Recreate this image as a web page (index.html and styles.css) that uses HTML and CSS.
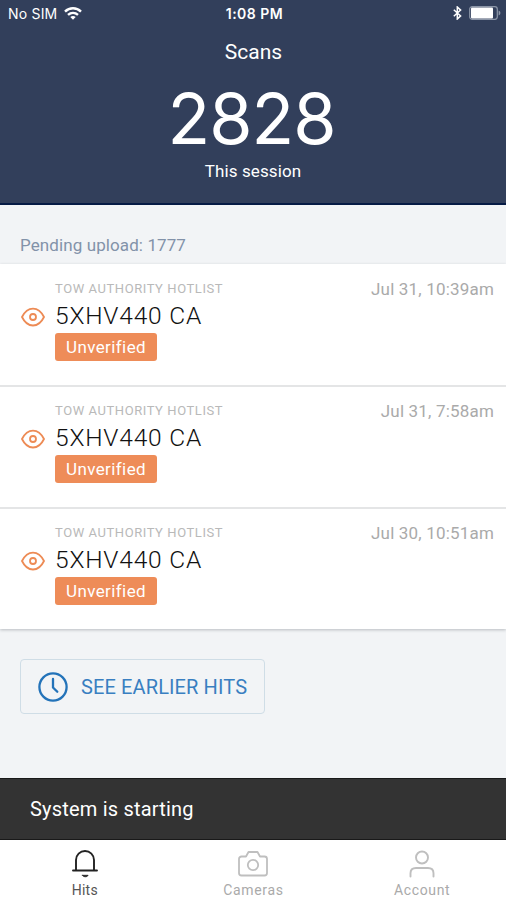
FILE: index.html
```html
<!DOCTYPE html>
<html lang="en">
<head>
<meta charset="utf-8">
<title>Scans</title>
<link rel="stylesheet" href="styles.css">
</head>
<body>
<div class="app">
  <header class="header">
    <div class="status">
      <div class="carrier"><span class="sim">No SIM</span>
        <svg width="18" height="13" viewBox="0 0 18 13" fill="none" stroke="#fff" stroke-width="2.400"><path d="M1 4.600C5.500.2 12.500.2 17 4.600M4 7.900c3-2.700 7-2.700 10 0"/><path d="M6.300 10c1.600-1.400 3.800-1.400 5.400 0L9 12.800z" fill="#fff" stroke="none"/></svg>
      </div>
      <div class="time">1:08 PM</div>
      <div class="power">
        <svg width="9" height="14" viewBox="0 0 9 14" fill="none" stroke="#fff" stroke-width="1.500"><path d="M.8 3.800 7.600 9.900 4.300 13V1l3.300 3.100L.8 10.200"/></svg>
        <svg width="32" height="14" viewBox="0 0 32 14"><rect x=".7" y=".7" width="27.600" height="12.600" rx="2.500" fill="none" stroke="#8c96a8" stroke-width="1.200"/><rect x="2" y="1.500" width="22" height="11" rx="1" fill="#fff"/><path d="M29.600 4.500c2.400 1 2.400 4 0 5z" fill="#8c96a8"/></svg>
      </div>
    </div>
    <h1 class="title"><span>Scans</span></h1>
    <div class="count"><span>2828</span></div>
    <div class="session"><span>This session</span></div>
  </header>
  <main class="content">
    <div class="pending"><span>Pending upload: 1777</span></div>
    <section class="list">
      <article class="hit">
        <svg class="eye" width="24" height="20" viewBox="0 0 24 20"><path d="M1 10C6.500-1.300 17.500-1.300 23 10 17.500 21.300 6.500 21.300 1 10z"/><circle cx="12" cy="10" r="3"/></svg>
        <div class="details"><div class="source"><span>TOW AUTHORITY HOTLIST</span></div><div class="plate"><span>5XHV440 CA</span></div><div class="badge"><span>Unverified</span></div></div>
        <time class="date"><span>Jul 31, 10:39am</span></time>
      </article>
      <article class="hit">
        <svg class="eye" width="24" height="20" viewBox="0 0 24 20"><path d="M1 10C6.500-1.300 17.500-1.300 23 10 17.500 21.300 6.500 21.300 1 10z"/><circle cx="12" cy="10" r="3"/></svg>
        <div class="details"><div class="source"><span>TOW AUTHORITY HOTLIST</span></div><div class="plate"><span>5XHV440 CA</span></div><div class="badge"><span>Unverified</span></div></div>
        <time class="date"><span>Jul 31, 7:58am</span></time>
      </article>
      <article class="hit">
        <svg class="eye" width="24" height="20" viewBox="0 0 24 20"><path d="M1 10C6.500-1.300 17.500-1.300 23 10 17.500 21.300 6.500 21.300 1 10z"/><circle cx="12" cy="10" r="3"/></svg>
        <div class="details"><div class="source"><span>TOW AUTHORITY HOTLIST</span></div><div class="plate"><span>5XHV440 CA</span></div><div class="badge"><span>Unverified</span></div></div>
        <time class="date"><span>Jul 30, 10:51am</span></time>
      </article>
    </section>
    <button class="earlier">
      <svg width="30" height="30" viewBox="0 0 30 30" fill="none" stroke="#2373b9" stroke-width="2.300" stroke-linecap="round" stroke-linejoin="round"><circle cx="15" cy="15" r="13.600"/><path d="M15 7v8.500l4.300 4.300"/></svg>
      <span>SEE EARLIER HITS</span>
    </button>
  </main>
  <div class="toast"><span>System is starting</span></div>
  <nav class="tabs">
    <a class="tab active"><svg width="28" height="28" viewBox="0 0 28 28" fill="none" stroke="#222" stroke-width="1.900" stroke-linecap="round" stroke-linejoin="round"><path d="M2 20.500h24M5 20.500V10a9 9 0 0 1 18 0v10.500"/><path d="M11.500 25.300h5.600c-1 2-4.600 2-5.600 0z" fill="#222" stroke-width=".8"/></svg><span>Hits</span></a>
    <a class="tab cameras"><svg width="30" height="28" viewBox="0 0 30 28" fill="none" stroke="#bfbfbf" stroke-width="1.800" stroke-linejoin="round"><path d="M3.500 6.500H8L10.500 2h9L22 6.500h4.500A2.500 2.500 0 0 1 29 9v14a2.500 2.500 0 0 1-2.500 2.500h-23A2.500 2.500 0 0 1 1 23V9a2.500 2.500 0 0 1 2.500-2.500z"/><circle cx="15" cy="15" r="5.200"/></svg><span>Cameras</span></a>
    <a class="tab account"><svg width="28" height="28" viewBox="0 0 28 28" fill="none" stroke="#bfbfbf" stroke-width="1.900" stroke-linecap="round"><circle cx="14" cy="7.500" r="6"/><path d="M2.500 26.500v-3.200c0-3.500 2-5.300 5.500-5.300h12c3.500 0 5.500 1.800 5.500 5.300v3.200"/></svg><span>Account</span></a>
  </nav>
</div>
</body>
</html>
```
FILE: styles.css
```css
* { box-sizing: border-box; }
body { margin: 0; font-family: Roboto, "Liberation Sans", sans-serif; }
.app { width: 506px; height: 900px; display: flex; flex-direction: column; overflow: hidden; background: #f2f4f6; }
svg { display: block; flex: none; }

.header { height: 205px; flex: none; background: #323f5b; border-bottom: 2px solid #061b45; color: #fff; text-align: center; }
.status { display: grid; grid-template-columns: 1fr auto 1fr; align-items: center; height: 26px; padding: 0 5px 0 8px; font-family: Inter, sans-serif; font-size: 14px; }
.carrier { display: flex; align-items: center; gap: 7px; }
.sim { letter-spacing: 0.2px; }
.time { font-weight: 600; font-size: 14px; letter-spacing: 0.5px; }
.power { display: flex; justify-content: flex-end; align-items: center; gap: 7px; }
.title { margin: 10px 0 0; padding-left: 1px; font-size: 21px; line-height: 32px; font-weight: 400; }
.count { margin-top: 16px; font-family: Inter, sans-serif; font-size: 70px; line-height: 69px; letter-spacing: -1px; padding-right: 3px; }
.session { margin-top: 6px; font-size: 17px; line-height: 24px; letter-spacing: 0.1px; }

.content { flex: 1; display: flex; flex-direction: column; align-items: flex-start; }
.pending { height: 59px; padding: 28px 20px 0; font-size: 17px; line-height: 24px; letter-spacing: 0.1px; color: #8292a9; }
.list { width: 100%; background: #fff; box-shadow: 0 1px 3px #b8bcc0; }
.hit { display: flex; height: 122px; padding: 14px 12px 0 21px; border-top: 2px solid #e4e5e6; }
.hit:first-child { border-top: 0; height: 121px; padding-top: 15px; }
.eye { margin-top: 28px; fill: none; stroke: #ed8b55; stroke-width: 1.8; }
.details { margin-left: 10px; flex: 1; }
.source { font-size: 13px; line-height: 20px; letter-spacing: 0.57px; color: #b9b9b9; }
.plate { font-size: 24.5px; font-weight: 300; line-height: 34px; letter-spacing: 0.8px; color: #111; }
.badge { width: 102px; height: 28px; border-radius: 3px; background: #ee8c58; color: #fff; text-align: center; font-size: 17px; line-height: 28px; letter-spacing: 0.4px; }
.date { font-size: 17px; line-height: 20px; letter-spacing: 0.18px; color: #aaa; }

.earlier { margin: 30px 0 0 20px; width: 245px; height: 55px; display: flex; align-items: center; gap: 13px; padding: 0 0 0 17px; border: 1.5px solid #cfdde6; border-radius: 4px; background: transparent; font-family: inherit; font-size: 20px; letter-spacing: 0.12px; color: #397fc1; }
.toast { flex: none; height: 62px; padding: 0 30px; line-height: 60px; font-size: 20px; letter-spacing: 0.2px; color: #fff; background: #333; border: solid #191919; border-width: 1px 0; }
.tabs { flex: none; height: 60px; display: grid; grid-template-columns: repeat(3, 1fr); background: #fff; }
.tab { display: flex; flex-direction: column; align-items: center; padding: 10px 0 0 1px; font-size: 14px; line-height: 20px; gap: 2px; letter-spacing: 0.65px; color: #aaa; }
.active { color: #555; letter-spacing: 0.3px; }
```
